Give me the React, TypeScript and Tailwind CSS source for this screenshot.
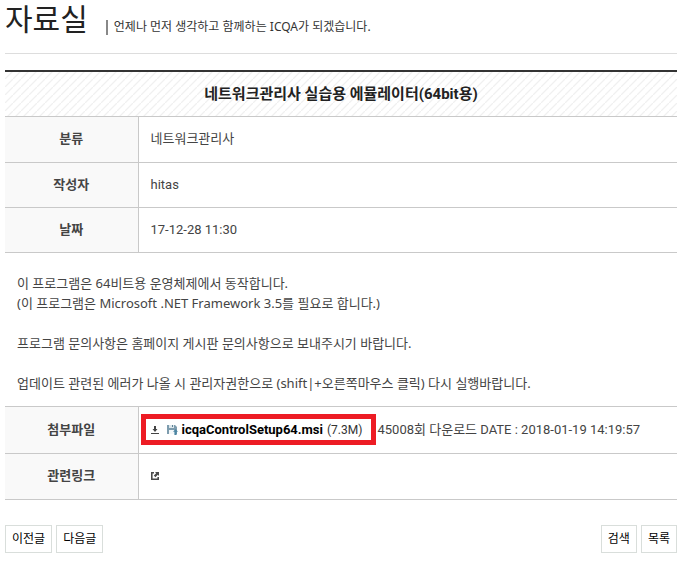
import React from 'react';

const info = [
  { label: '분류', value: '네트워크관리사' },
  { label: '작성자', value: 'hitas' },
  { label: '날짜', value: '17-12-28 11:30' },
];

const thClass = 'w-[133px] border-r border-[#c9c9c9] bg-[#f9f9f9] text-center font-bold';
const tdClass = 'px-3 text-left';
const buttonClass = 'h-7 border border-[#d9dedb] bg-white px-1.5 text-[12px] leading-5 text-black';

function DownloadIcon() {
  return (
    <svg className="h-2 w-2 shrink-0" viewBox="0 0 8 8" fill="#444">
      <path d="M3 0h2v3h1.5L4 6 1.5 3H3zM0 7h8v1H0z" />
    </svg>
  );
}

function DiskIcon() {
  return (
    <svg className="h-[11px] w-[11px] shrink-0" viewBox="0 0 11 11">
      <path d="M0 1h8l2 2v7H0z" fill="#7d9cae" />
      <path d="M2 1h5v3H2z" fill="#dce7ec" />
      <path d="M5 1h1v2H5z" fill="#5c7f92" />
      <path d="M2 6h6v4H2z" fill="#f3f7f9" />
      <path d="M8.5 5 11 7.7H9.6V11H7.4V7.7H6z" fill="#4c86a3" />
    </svg>
  );
}

function ExternalIcon() {
  return (
    <svg className="h-2 w-2" viewBox="0 0 8 8">
      <path d="M3 .8H.8v6.4h6.4V5" fill="none" stroke="#4a4a4a" strokeWidth="1.6" />
      <path d="M4 0h4v4L6.8 2.8 4.4 5.2 2.8 3.6l2.4-2.4z" fill="#4a4a4a" />
    </svg>
  );
}

export default function App() {
  return (
    <div className="bg-white pr-3.5 pl-[5px] font-['Roboto','Noto_Sans_CJK_KR',sans-serif] text-[13px] leading-5 text-[#444]">
      <header className="flex h-[54px] items-start border-b border-[#dddddd]">
        <h1 className="text-[30px] leading-10 text-[#222]">자료실</h1>
        <p className="mt-[19px] ml-[18px] flex items-center gap-1.5 font-['Noto_Sans','Noto_Sans_CJK_KR',sans-serif] text-[12px] leading-4 text-[#333]">
          <span className="h-[15px] w-0.5 bg-[#888]" />
          언제나 먼저 생각하고 함께하는 ICQA가 되겠습니다.
        </p>
      </header>

      <table className="mt-4 w-full border-collapse border-t-2 border-[#333]">
        <thead>
          <tr className="h-[45px] border-b border-[#c9c9c9] bg-[linear-gradient(135deg,#ffffff_40%,#f0f0f0_50%,#ffffff_60%)] bg-size-[8px_8px]">
            <th colSpan={2} className="text-[15px] font-bold text-[#222]">
              네트워크관리사 실습용 에뮬레이터(64bit용)
            </th>
          </tr>
        </thead>
        <tbody>
          {info.map((row) => (
            <tr key={row.label} className="h-[45px] border-b border-[#c9c9c9] first:h-[46px]">
              <th scope="row" className={thClass}>{row.label}</th>
              <td className={tdClass}>{row.value}</td>
            </tr>
          ))}
          <tr className="border-b border-[#c9c9c9] font-['Noto_Sans','Noto_Sans_CJK_KR',sans-serif]">
            <td colSpan={2} className="px-3 pt-5 pb-[13px]">
              <p>
                이 프로그램은 64비트용 운영체제에서 동작합니다.
                <br />
                (이 프로그램은 Microsoft .NET Framework 3.5를 필요로 합니다.)
              </p>
              <p className="mt-5">프로그램 문의사항은 홈페이지 게시판 문의사항으로 보내주시기 바랍니다.</p>
              <p className="mt-5">
                업데이트 관련된 에러가 나올 시 관리자권한으로 (shift|+오른쪽마우스 클릭) 다시 실행바랍니다.
              </p>
            </td>
          </tr>
          <tr className="h-[47px] border-b border-[#c9c9c9]">
            <th scope="row" className={thClass}>첨부파일</th>
            <td className="pl-0.5 text-left">
              <div className="flex items-center gap-0.5 whitespace-nowrap">
                <a href="#" className="flex h-[31px] w-[235px] items-center border-5 border-[#ed1c24] pl-[5px] text-black">
                  <DownloadIcon />
                  <span className="mr-1 ml-2">
                    <DiskIcon />
                  </span>
                  <strong className="mr-1 font-bold">icqaControlSetup64.msi</strong>
                  <span className="text-[12px] text-[#333]">(7.3M)</span>
                </a>
                <span>45008회 다운로드 DATE : 2018-01-19 14:19:57</span>
              </div>
            </td>
          </tr>
          <tr className="h-[46px] border-b border-[#c9c9c9]">
            <th scope="row" className={thClass}>관련링크</th>
            <td className={tdClass}>
              <a href="#" aria-label="관련링크" className="inline-block">
                <ExternalIcon />
              </a>
            </td>
          </tr>
        </tbody>
      </table>

      <div className="mt-[25px] flex justify-between">
        <div className="flex gap-1">
          <button type="button" className={buttonClass}>이전글</button>
          <button type="button" className={buttonClass}>다음글</button>
        </div>
        <div className="flex gap-1">
          <button type="button" className={buttonClass}>검색</button>
          <button type="button" className={buttonClass}>목록</button>
        </div>
      </div>
    </div>
  );
}
